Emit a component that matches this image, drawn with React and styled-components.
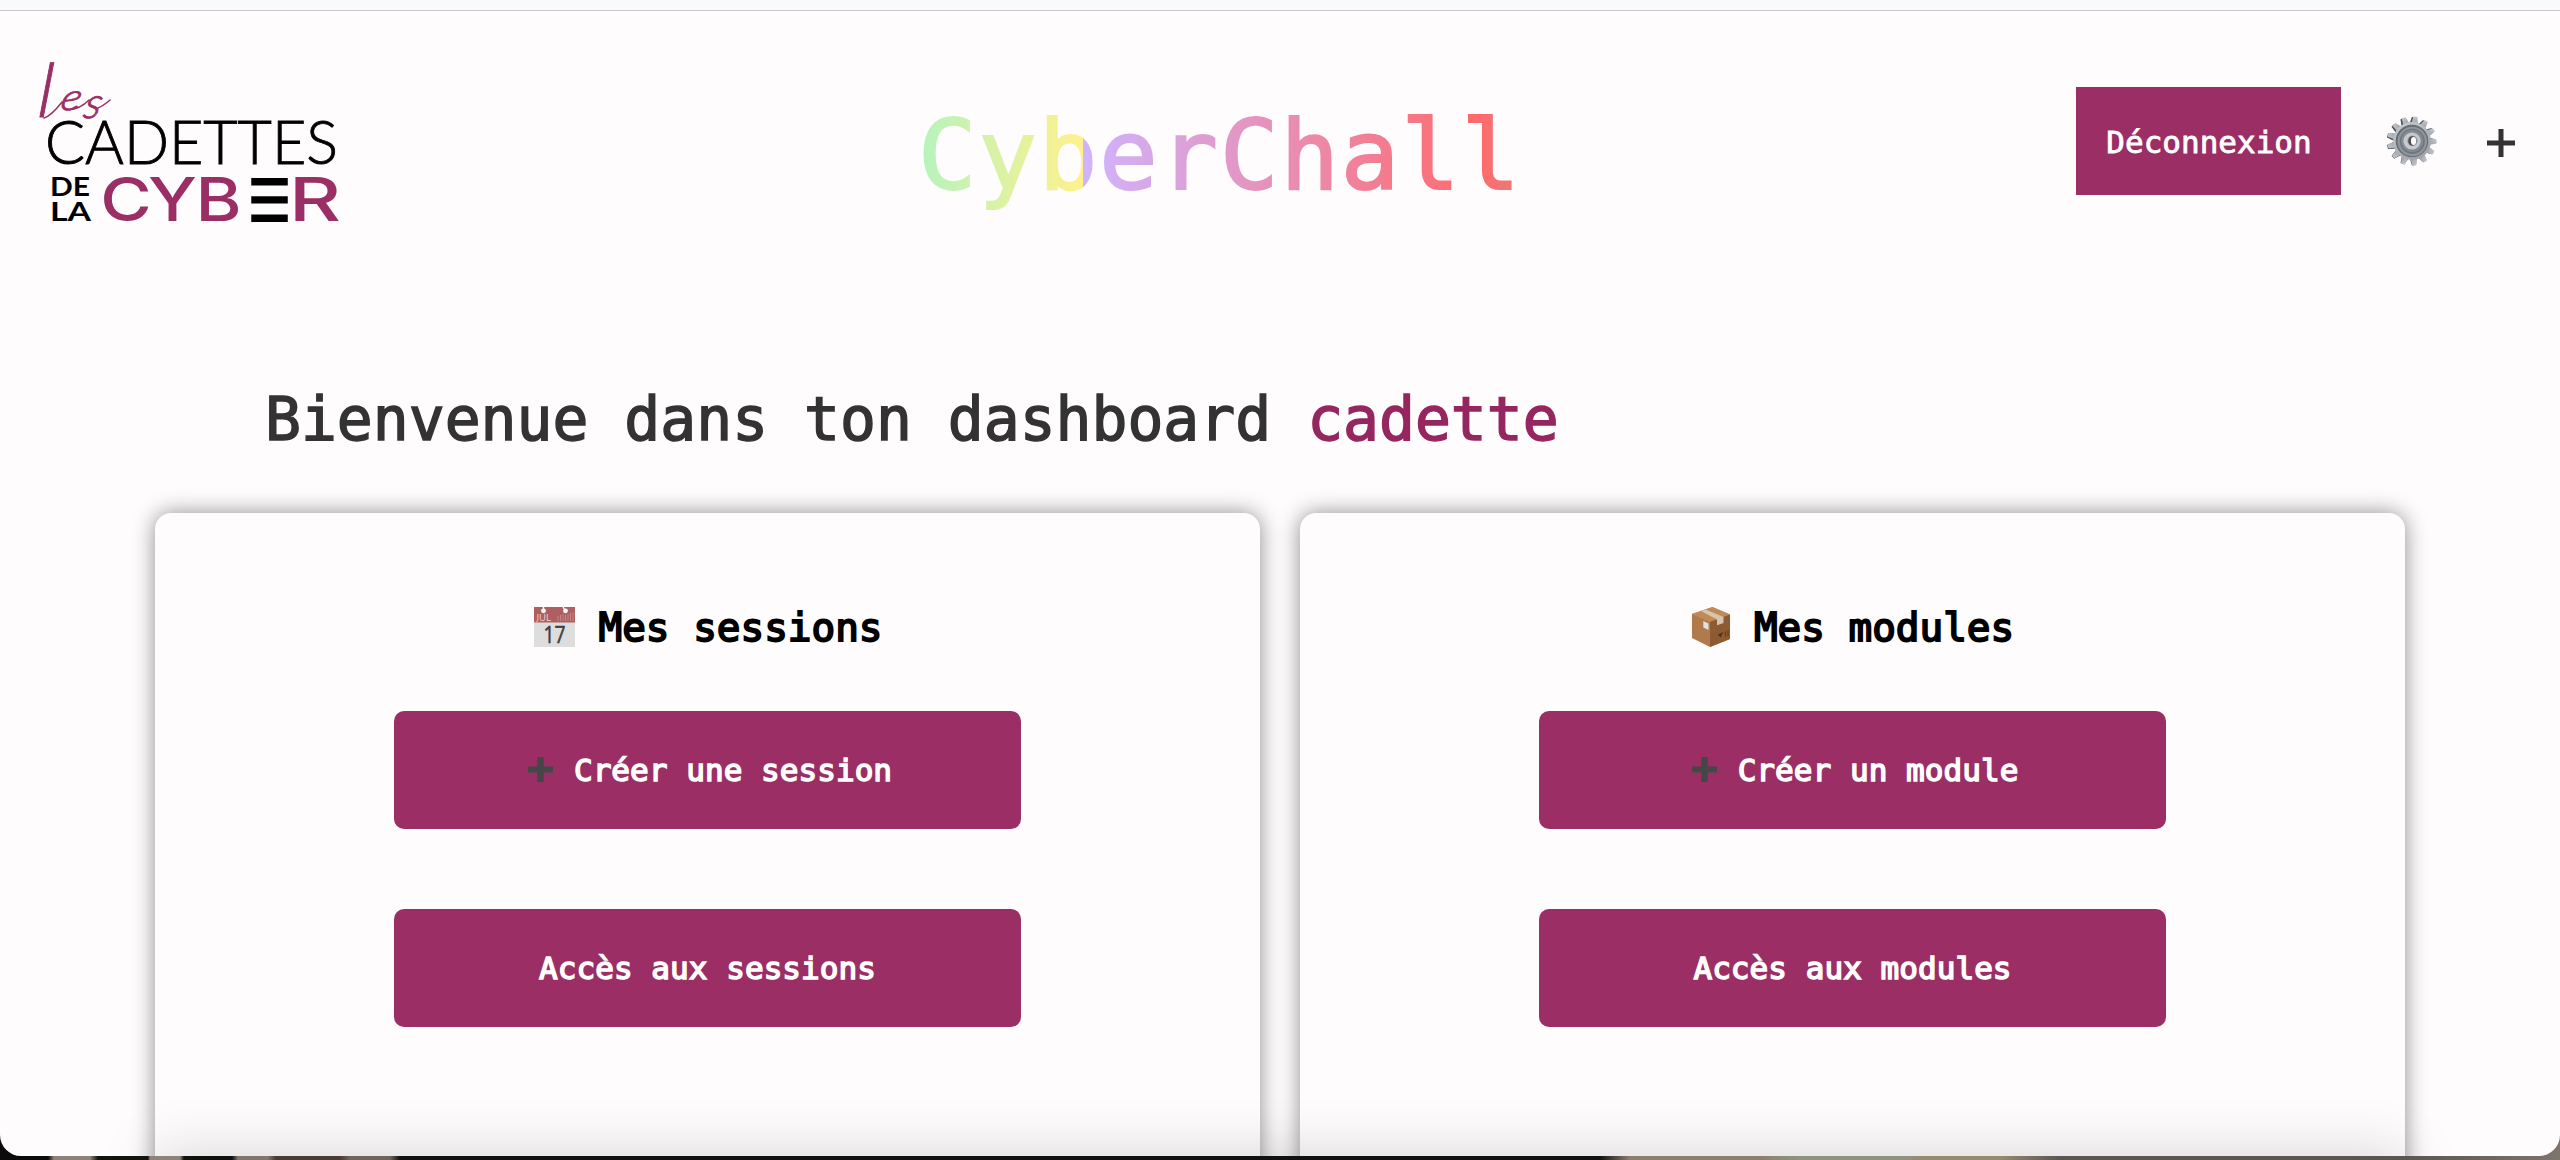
import React from "react";
import styled, { createGlobalStyle, css } from "styled-components";

const plum = "#9b2f65";
const paper = "#fefcfd";

const GlobalStyle = createGlobalStyle`
  * { box-sizing: border-box; }
  body { margin: 0; background: #0b0b0b; overflow: hidden; }
`;

const Desktop = styled.div`
  width: 2560px;
  height: 1160px;
  overflow: hidden;
  font-family: "DejaVu Sans Mono", "Liberation Mono", monospace;
  background: linear-gradient(90deg,
    #0b0b0b 0 48px, #8d8378 54px 90px, #14140f 98px 148px, #8d8378 150px 180px,
    #0e110d 184px 232px, #80766c 238px 268px, #4a3a31 276px 340px, #6f655c 350px 390px, #111 400px 1600px,
    #8d7f6c 1630px 1760px, #8f9480 1800px 1900px, #978a72 1920px 2000px, #5a5650 2060px 2400px, #7d746c 2560px);
`;

const Window = styled.div`
  height: 1156px;
  display: flex;
  flex-direction: column;
  overflow: hidden;
  border-radius: 0 0 21px 21px;
  background: ${paper};
`;

const Toolbar = styled.div`
  flex: none;
  height: 11px;
  background: #f9fafb;
  border-bottom: 1px solid #c9c9cb;
`;

const Header = styled.header`
  flex: none;
  height: 359px;
  display: flex;
  align-items: flex-start;
  padding: 29px 45px 0 20px;
`;

const Logo = styled.svg`
  flex: none;
  width: 340px;
  height: 200px;
`;

const Brand = styled.h1`
  margin: 56px 0 0 558px;
  font-size: 97px;
  font-weight: 400;
  line-height: 120px;
  letter-spacing: 2px;
  white-space: nowrap;
  color: transparent;
  -webkit-text-stroke: 2.2px transparent;
  background: linear-gradient(90deg, #b6f3bd 0, #fff18c 165px, #d0b4ff 165px, #ff6a6c 560px, #e97c78 604px);
  background-clip: text;
  -webkit-background-clip: text;
`;

const Actions = styled.nav`
  margin: 47px 0 0 auto;
  display: flex;
  align-items: center;
`;

const fill = css`
  border: 0;
  color: #fff;
  background: ${plum};
  font-family: inherit;
  font-size: 31px;
  white-space: pre;
`;

const Logout = styled.button`
  ${fill}
  width: 265px;
  height: 108px;
  padding: 1px 0 0 1px;
  -webkit-text-stroke: 0.8px #fff;
`;

const Gear = styled.svg`
  width: 50px;
  height: 50px;
  margin-left: 46px;
`;

const Plus = styled.svg`
  flex: none;
  width: ${(p) => p.$size}px;
  height: ${(p) => p.$size}px;
  margin: ${(p) => p.$margin};
`;

const Welcome = styled.h2`
  flex: none;
  height: 143px;
  margin: 0;
  padding-left: 265px;
  font-size: 59.7px;
  font-weight: 400;
  line-height: 100px;
  white-space: nowrap;
  color: #333;
  -webkit-text-stroke: 1.5px;
`;

const Name = styled.span`
  color: #96265f;
`;

const Board = styled.main`
  flex: none;
  height: 643px;
  display: flex;
  gap: 40px;
  padding: 0 155px;
`;

const Card = styled.section`
  flex: 1;
  height: 800px;
  display: flex;
  flex-direction: column;
  align-items: center;
  border-radius: 16px;
  background: ${paper};
  box-shadow: 0 0 22px rgba(0, 0, 0, 0.44);
`;

const CardTitle = styled.h3`
  height: 60px;
  margin: 84px 0 54px;
  padding-left: 1px;
  display: flex;
  align-items: center;
  gap: 24px;
  font-size: 39.3px;
  font-weight: 400;
  color: #000;
  white-space: pre;
`;

const Label = styled.span`
  padding-top: 1px;
  -webkit-text-stroke: 1.9px #000;
`;

const Emoji = styled.svg`
  width: ${(p) => p.$width}px;
  height: 40px;
  overflow: visible;
`;

const CardButton = styled.button`
  ${fill}
  flex: none;
  width: 627px;
  height: 118px;
  margin-bottom: 80px;
  padding: 0;
  display: flex;
  align-items: center;
  justify-content: center;
  border-radius: 10px;
  letter-spacing: 0.05px;
  -webkit-text-stroke: 1.5px #fff;
`;

const Footer = styled.footer`
  position: relative;
  flex: none;
  height: 100px;
  margin: 0 155px;
  box-shadow: 0 0 60px rgba(0, 0, 0, 0.17);
`;

function CadettesLogo() {
  return (
    <Logo viewBox="0 0 340 200">
      <g fontFamily="Lato" fontStyle="italic" fontWeight="300" fill={plum} stroke={plum}>
        <text x="0" y="0" fontSize="75" strokeWidth="0.9" transform="translate(16.500 77) skewX(-4)">l</text>
        <text x="0" y="0" fontSize="37" strokeWidth="0.9" transform="translate(39 69.500) skewX(-14) scale(1.15 1)">e</text>
        <text x="0" y="0" fontSize="43" strokeWidth="0.9" transform="translate(62 77.500) skewX(-14)">s</text>
      </g>
      <path d="M24 78 Q31 76 42 62M50 69.500 Q60 69 69 60M78 68 Q83 66 90 60" fill="none" stroke={plum} strokeWidth="1.500" strokeLinecap="round" />
      <text x="25" y="124.3" fontFamily="Lato" fontWeight="300" fontSize="61.5" stroke="#000" strokeWidth="0.9" textLength="293" lengthAdjust="spacingAndGlyphs">CADETTES</text>
      <text x="30" y="156" fontFamily="Lato" fontWeight="700" fontSize="26.4" textLength="40" lengthAdjust="spacingAndGlyphs">DE</text>
      <text x="30" y="180.7" fontFamily="Lato" fontWeight="700" fontSize="26.4" textLength="41" lengthAdjust="spacingAndGlyphs">LA</text>
      <text x="68.500 109.300 150" y="180.7" fontFamily="Inter" fontWeight="500" fontSize="60" fill={plum} transform="scale(1.17 1)">CYB</text>
      <text x="228" y="180.7" fontFamily="DejaVu Sans" fontWeight="700" fontSize="58" stroke="#000" strokeWidth="1.8" textLength="43" lengthAdjust="spacingAndGlyphs">☰</text>
      <text x="269" y="180.7" fontFamily="Inter" fontWeight="500" fontSize="60" fill={plum} textLength="52" lengthAdjust="spacingAndGlyphs">R</text>
    </Logo>
  );
}

function GearIcon() {
  const teeth = Array.from({ length: 13 }, (_, i) => i * (360 / 13) + 8);
  return (
    <Gear viewBox="0 0 50 50">
      <defs>
        <linearGradient id="steel" x1="0" y1="0" x2="0.6" y2="1">
          <stop offset="0" stopColor="#c3ced6" />
          <stop offset="1" stopColor="#a3a3aa" />
        </linearGradient>
      </defs>
      {teeth.map((a) => (
        <path key={`d${a}`} d="M21 8 L22.5 .8 H26.5 L28 8Z" fill="#56514c" transform={`translate(-1 .2) rotate(${a} 25 25)`} />
      ))}
      {teeth.map((a) => (
        <path key={a} d="M22 8 L23 .6 Q25 0 27 .6 L28.6 8Z" fill="url(#steel)" transform={`rotate(${a} 25 25)`} />
      ))}
      <circle cx="25" cy="25" r="19" fill="url(#steel)" />
      <circle cx="25" cy="25" r="16.3" fill="#666c74" />
      <circle cx="25.3" cy="25.5" r="14.8" fill="#90959b" />
      <circle cx="25.3" cy="25.3" r="12.5" fill="#70757c" />
      <circle cx="25.2" cy="25" r="11" fill="#858b92" />
      <circle cx="25" cy="25" r="8.6" fill="#c6c9cf" />
      <circle cx="25.5" cy="24.8" r="5.2" fill="#999ca3" />
      <ellipse cx="25.3" cy="25" rx="4" ry="4.7" fill="#4d4a49" />
      <ellipse cx="26.5" cy="25" rx="2.6" ry="3.9" fill="#fff" />
    </Gear>
  );
}

function CalendarIcon() {
  return (
    <Emoji $width={41} viewBox="0 0 41 40">
      <rect width="41" height="40" fill="#dedddd" />
      <rect width="41" height="15.5" fill="#ae5f60" />
      <circle cx="9.5" cy="3.8" r="2.4" fill="#fff" />
      <circle cx="31.5" cy="3.8" r="2.4" fill="#fff" />
      <path d="M9.5 4V0M31.5 4L29 0" stroke="#fff" strokeWidth="1.4" />
      <path d="M24 9v5M26.500 8v6M29 7v7M31.500 8v6M34 7v7M36.500 6v8M39 5v9" stroke="#c98a8a" strokeWidth="0.9" />
      <text x="2.500" y="13.800" fontFamily="Open Sans" fontSize="9.5" fill="#ecd6d6">JUL</text>
      <text x="9.500" y="35.800" fontFamily="Open Sans" fontSize="23.500" fill="#3f3f3f" stroke="#3f3f3f" strokeWidth="0.6" textLength="22" lengthAdjust="spacingAndGlyphs">17</text>
    </Emoji>
  );
}

function PackageIcon() {
  return (
    <Emoji $width={38} viewBox="0 0 38 40">
      <path d="M0 7 L20.500 0 L38 7.500 L38 32 L18 40 L0 31Z" fill="#b17a4c" />
      <path d="M0 7 L20.500 0 L38 7.500 L18 15Z" fill="#c08a58" />
      <path d="M18 15 L38 7.500 V32 L18 40Z" fill="#8d5a31" />
      <path d="M9 4 L13.500 2.400 L31.500 10 V16 L25 18.300 V12.500Z" fill="#d9c4ae" />
      <path d="M11.300 14 L16.500 16.500 V23 L11.300 20.500Z" fill="#dce1e3" />
      <path d="M26 27.500 L31.500 25 L28.500 30.500Z" fill="#4c331f" />
      <path d="M33.500 24v6M36 23v6" stroke="#6a4222" strokeWidth="1.200" />
    </Emoji>
  );
}

function AddSign() {
  return (
    <Plus $size={25} $margin="-2px 21px 0 5px" viewBox="0 0 25 25">
      <path d="M9.300 0h6.400v9.500H25v6H15.700V25H9.300v-9.500H0v-6h9.300z" fill="#464646" />
      <path d="M0 14.500h9.300v1H0zM15.700 14.500H25v1h-9.300z" fill="#5e4552" />
    </Plus>
  );
}

function Panel({ icon, title, create, access }) {
  return (
    <Card>
      <CardTitle>{icon}<Label>{title}</Label></CardTitle>
      <CardButton><AddSign />{create}</CardButton>
      <CardButton>{access}</CardButton>
    </Card>
  );
}

export default function App() {
  return (
    <Desktop>
      <GlobalStyle />
      <Window>
        <Toolbar />
        <Header>
          <CadettesLogo />
          <Brand>CyberChall</Brand>
          <Actions>
            <Logout>Déconnexion</Logout>
            <GearIcon />
            <Plus $size={28} $margin="3px 0 0 50px" viewBox="0 0 28 28">
              <path d="M14 0V28M0 14H28" stroke="#333" strokeWidth="5" />
            </Plus>
          </Actions>
        </Header>
        <Welcome>Bienvenue dans ton dashboard <Name>cadette</Name></Welcome>
        <Board>
          <Panel icon={<CalendarIcon />} title="Mes sessions" create="Créer une session" access="Accès aux sessions" />
          <Panel icon={<PackageIcon />} title="Mes modules" create="Créer un module" access="Accès aux modules" />
        </Board>
        <Footer />
      </Window>
    </Desktop>
  );
}
